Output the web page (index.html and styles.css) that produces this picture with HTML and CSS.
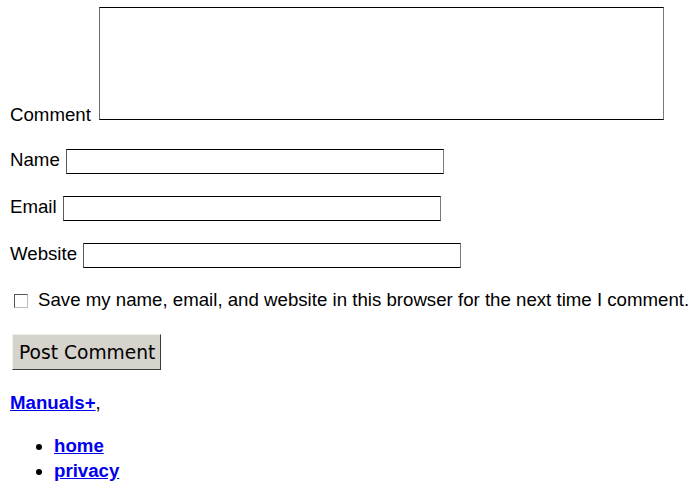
FILE: index.html
```html
<!DOCTYPE html>
<html>
<head>
<meta charset="utf-8">
<title>Comment form</title>
<link rel="stylesheet" href="styles.css">
</head>
<body>
<form class="comment-form">
  <p class="row row-comment">
    <label class="lbl" for="comment">Comment</label>
    <textarea class="field-area" id="comment"></textarea>
  </p>
  <p class="row row-field">
    <label class="lbl" for="author">Name</label>
    <input class="field" id="author" type="text">
  </p>
  <p class="row row-field">
    <label class="lbl" for="email">Email</label>
    <input class="field" id="email" type="text">
  </p>
  <p class="row row-field">
    <label class="lbl" for="url">Website</label>
    <input class="field" id="url" type="text">
  </p>
  <p class="row row-check">
    <input class="check" id="cookies" type="checkbox">
    <label class="lbl lbl-nowrap" for="cookies">Save my name, email, and website in this browser for the next time I comment.</label>
  </p>
  <p class="row-submit">
    <button class="submit" type="button">Post Comment</button>
  </p>
</form>
<p class="site"><a class="link" href="#">Manuals+</a>,</p>
<ul class="menu">
  <li><a class="link" href="#">home</a></li>
  <li><a class="link" href="#">privacy</a></li>
</ul>
</body>
</html>
```

FILE: styles.css
```css
html, body {
  margin: 0;
  padding: 0;
  background: #fff;
}
body {
  padding: 7px 0 0 10px;
  font-family: "Liberation Sans", Arial, sans-serif;
  font-size: 18.67px;
  line-height: 20px;
  color: #000;
}
.comment-form {
  margin: 0;
}
.row {
  display: flex;
  margin: 0;
}
.lbl {
  display: block;
}
.lbl-nowrap {
  white-space: nowrap;
}
.row-comment {
  align-items: flex-end;
  gap: 8px;
  margin-bottom: 24px;
}
.field-area {
  display: block;
  width: 565px;
  height: 113px;
  box-sizing: border-box;
  margin: 0 0 5px 0;
  padding: 2px;
  border: 1px solid #000;
  border-left-color: #6a6a6a;
  border-right-color: #7a7a7a;
  resize: none;
  background: #fff;
}
.row-field {
  align-items: flex-start;
  gap: 6px;
  margin-bottom: 22px;
}
.row-field .lbl {
  margin-top: 1px;
}
.field {
  display: block;
  width: 378px;
  height: 25px;
  box-sizing: border-box;
  margin: 0;
  padding: 1px 2px;
  border: 1px solid #000;
  border-left-color: #5a5a5a;
  border-right-color: #7a7a7a;
  background: #fff;
}
.row-check {
  align-items: center;
  gap: 10px;
  margin-top: 0;
  margin-bottom: 24px;
  padding-left: 4px;
}
.check {
  appearance: none;
  -webkit-appearance: none;
  display: block;
  flex: none;
  width: 14px;
  height: 14px;
  box-sizing: border-box;
  margin: 2px 0 0 0;
  border: 1px solid #555;
  border-right-color: #bbb;
  border-bottom-color: #bbb;
  background: #fff;
}
.row-submit {
  margin: 0 0 20px 2px;
}
.submit {
  display: block;
  height: 36px;
  padding: 0 5px 0 6px;
  font-family: "DejaVu Sans", sans-serif;
  font-size: 18.67px;
  color: #000;
  background: #d6d3cd;
  border: 1px solid #eeeeea;
  border-right-color: #3a3a3a;
  border-bottom-color: #3a3a3a;
  border-radius: 0;
}
.site {
  margin: 0 0 18px 0;
  line-height: 25px;
}
.link {
  color: #0000ee;
  font-weight: bold;
  text-decoration: underline;
}
.menu {
  margin: 0;
  padding-left: 44px;
  line-height: 25px;
}
```
